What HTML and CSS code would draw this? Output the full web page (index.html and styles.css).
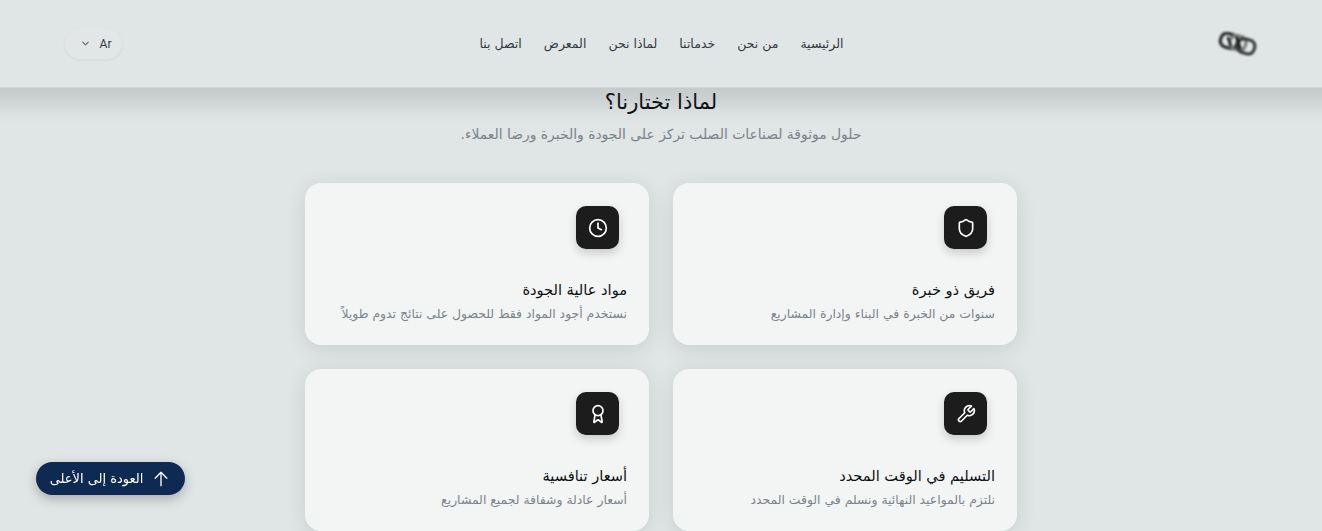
FILE: index.html
```html
<!DOCTYPE html>
<html lang="ar" dir="rtl">
<head>
  <meta charset="UTF-8" />
  <title>لماذا تختارنا؟</title>
  <meta name="viewport" content="width=device-width, initial-scale=1.0" />
  <link rel="stylesheet" href="styles.css">
</head>
<body>
  <header class="site-header">
    <a href="#" class="logo" aria-label="logo">
      <svg class="logo-mark" viewBox="0 0 40 24" width="40" height="24" fill="none">
        <g transform="rotate(16 20 12)">
          <rect x="2" y="4.5" width="17" height="14" rx="6" stroke="#2b2b2b" stroke-width="3.2" />
          <rect x="11.5" y="4" width="16" height="14" rx="6" stroke="#777" stroke-width="3" />
          <rect x="20" y="5" width="17" height="14" rx="6" stroke="#3a3a3a" stroke-width="3.2" />
          <path d="M8 8l6 8M17 6l7 10" stroke="#141414" stroke-width="2.2" />
        </g>
      </svg>
    </a>
    <nav class="main-nav">
      <a href="#">الرئيسية</a>
      <a href="#">من نحن</a>
      <a href="#">خدماتنا</a>
      <a href="#">لماذا نحن</a>
      <a href="#">المعرض</a>
      <a href="#">اتصل بنا</a>
    </nav>
    <button class="lang-btn">
      <span>Ar</span>
      <svg viewBox="0 0 24 24" width="11" height="11" fill="none" stroke="#5f6b6b" stroke-width="2.4" stroke-linecap="round" stroke-linejoin="round"><path d="M6 9l6 6 6-6" /></svg>
    </button>
  </header>

  <main class="why-us">
    <h2>لماذا تختارنا؟</h2>
    <p class="lead">حلول موثوقة لصناعات الصلب تركز على الجودة والخبرة ورضا العملاء.</p>

    <div class="card-grid">
      <div class="card">
        <div class="card-icon">
          <svg viewBox="0 0 24 24" width="20" height="20"><path d="M20 13c0 5-3.5 7.5-7.66 8.95a1 1 0 0 1-.67-.01C7.5 20.5 4 18 4 13V6a1 1 0 0 1 1-1c2 0 4.5-1.2 6.24-2.72a1.17 1.17 0 0 1 1.52 0C14.51 3.81 17 5 19 5a1 1 0 0 1 1 1z" /></svg>
        </div>
        <h3>فريق ذو خبرة</h3>
        <p>سنوات من الخبرة في البناء وإدارة المشاريع</p>
      </div>
      <div class="card">
        <div class="card-icon">
          <svg viewBox="0 0 24 24" width="20" height="20"><circle cx="12" cy="12" r="10" /><path d="M12 6v6l4 2" /></svg>
        </div>
        <h3>مواد عالية الجودة</h3>
        <p>نستخدم أجود المواد فقط للحصول على نتائج تدوم طويلاً</p>
      </div>
      <div class="card">
        <div class="card-icon">
          <svg viewBox="0 0 24 24" width="20" height="20"><path d="M14.7 6.3a1 1 0 0 0 0 1.4l1.6 1.6a1 1 0 0 0 1.4 0l3.77-3.77a6 6 0 0 1-7.94 7.94l-6.91 6.91a2.12 2.12 0 0 1-3-3l6.91-6.91a6 6 0 0 1 7.94-7.94l-3.76 3.76z" /></svg>
        </div>
        <h3>التسليم في الوقت المحدد</h3>
        <p>نلتزم بالمواعيد النهائية ونسلم في الوقت المحدد</p>
      </div>
      <div class="card">
        <div class="card-icon">
          <svg viewBox="0 0 24 24" width="20" height="20"><path d="M15.48 12.89l1.51 8.53a.5.5 0 0 1-.81.47l-3.58-2.69a1 1 0 0 0-1.2 0l-3.59 2.69a.5.5 0 0 1-.81-.47l1.51-8.53" /><circle cx="12" cy="8" r="6" /></svg>
        </div>
        <h3>أسعار تنافسية</h3>
        <p>أسعار عادلة وشفافة لجميع المشاريع</p>
      </div>
    </div>
  </main>

  <a href="#" class="back-top">
    <svg viewBox="0 0 24 24" width="20" height="20" fill="none" stroke="#fff" stroke-width="1.6" stroke-linecap="round" stroke-linejoin="round"><path d="M12 20V4M5 11l7-7 7 7" /></svg>
    <span>العودة إلى الأعلى</span>
  </a>
</body>
</html>
```

FILE: styles.css
```css
:root {
  --bg-color: #e0e5e5;
  --card-bg: #f3f5f4;
  --ink: #0c0f12;
  --muted: #7b838c;
  --icon-bg: #1c1c1c;
  --navy: #0f2a52;
}
* {
  box-sizing: border-box;
}
html, body {
  height: 531px;
  overflow: hidden;
}
body {
  margin: 0;
  font-family: "DejaVu Sans", "Noto Sans", sans-serif;
  background: var(--bg-color);
  color: var(--ink);
}
.site-header {
  position: relative;
  z-index: 2;
  height: 88px;
  background: var(--bg-color);
  box-shadow: 0 -23px 18px 40px rgba(60, 70, 70, 0.16);
  border-bottom: 1px solid #d3d8d8;
  display: grid;
  grid-template-columns: 1fr auto 1fr;
  align-items: center;
  padding: 0 64px 0 65px;
}
.logo {
  display: flex;
  justify-self: start;
}
.logo-mark {
  filter: blur(0.8px);
}
.main-nav {
  display: flex;
  gap: 22px;
}
.main-nav a {
  font-size: 12.5px;
  color: #333a44;
  text-decoration: none;
}
.lang-btn {
  justify-self: end;
  width: 57px;
  height: 31px;
  display: flex;
  align-items: center;
  justify-content: center;
  gap: 9px;
  padding: 0 0 0 4px;
  border: none;
  border-radius: 16px;
  background: #e2e6e6;
  box-shadow: 0 1px 3px rgba(60, 70, 70, 0.07);
  font-family: Roboto, sans-serif;
  font-size: 12px;
  color: #333a44;
}
.why-us {
  text-align: center;
}
.why-us h2 {
  margin: 1px 0 0;
  font-size: 21px;
  line-height: 26px;
  font-weight: 400;
}
.lead {
  margin: 7px 0 0;
  font-size: 13.9px;
  line-height: 24px;
  color: var(--muted);
}
.card-grid {
  width: 712px;
  margin: 37px auto 0;
  display: grid;
  grid-template-columns: 1fr 1fr;
  gap: 24px;
}
.card {
  height: 162px;
  padding: 23px 22px 0;
  background: var(--card-bg);
  border-radius: 16px;
  box-shadow: 0 4px 20px rgba(60, 70, 70, 0.14);
  text-align: right;
}
.card-icon {
  width: 43px;
  height: 43px;
  margin-right: 8px;
  display: flex;
  align-items: center;
  justify-content: center;
  background: var(--icon-bg);
  border-radius: 10px;
  box-shadow: 0 4px 10px rgba(0, 0, 0, 0.18);
}
.card-icon svg {
  fill: none;
  stroke: #fff;
  stroke-width: 2;
  stroke-linecap: round;
  stroke-linejoin: round;
}
.card h3 {
  margin: 31px 0 0;
  font-size: 14.6px;
  line-height: 20px;
  font-weight: 400;
}
.card p {
  margin: 5px 0 0;
  font-size: 12.4px;
  line-height: 18px;
  color: var(--muted);
}
.back-top {
  position: fixed;
  left: 36px;
  bottom: 36px;
  z-index: 3;
  width: 149px;
  height: 33px;
  display: flex;
  align-items: center;
  justify-content: center;
  gap: 8px;
  background: var(--navy);
  border-radius: 17px;
  box-shadow: 0 4px 12px rgba(0, 0, 0, 0.25);
  color: #fff;
  font-size: 13px;
  text-decoration: none;
}
```
